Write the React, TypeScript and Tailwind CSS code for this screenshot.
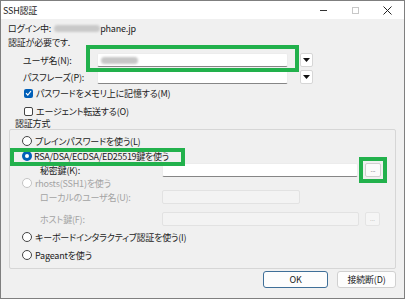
import type { ReactNode } from 'react';

const font = "font-['Meiryo_UI','Noto_Sans_CJK_JP',sans-serif] [font-feature-settings:'palt']";

function Radio({ checked = false, disabled = false }: { checked?: boolean; disabled?: boolean }) {
  if (checked) {
    return (
      <span className="w-[10px] h-[10px] rounded-full bg-[#005fb8] flex items-center justify-center shrink-0">
        <span className="w-[4px] h-[4px] rounded-full bg-white" />
      </span>
    );
  }
  return (
    <span
      className={
        'w-[10px] h-[10px] rounded-full border bg-white shrink-0 ' +
        (disabled ? 'border-[#c4c4c4]' : 'border-[#444]')
      }
    />
  );
}

function Check({ checked = false }: { checked?: boolean }) {
  if (checked) {
    return (
      <span className="w-[9px] h-[9px] rounded-[2px] bg-[#005fb8] flex items-center justify-center shrink-0">
        <svg width="7" height="6" viewBox="0 0 7 6">
          <path d="M1 3.2 L2.8 5 L6 1" fill="none" stroke="white" strokeWidth="1.2" />
        </svg>
      </span>
    );
  }
  return <span className="w-[9px] h-[9px] rounded-[2px] border border-[#444] bg-white shrink-0" />;
}

function Input({ w, children }: { w: string; children?: ReactNode }) {
  return (
    <div className={`${w} h-[14px] bg-white border border-[#ececec] border-b-[#868686] rounded-[2px] flex items-center`}>
      {children}
    </div>
  );
}

function Dropdown() {
  return (
    <div className="w-[13px] h-[14px] bg-white border border-[#d6d6d6] rounded-[2px] flex items-center justify-center">
      <svg width="7" height="4" viewBox="0 0 7 4">
        <path d="M0 0 H7 L3.5 4 Z" fill="#111" />
      </svg>
    </div>
  );
}

function Dots({ disabled = false, w = 'w-[16px]' }: { disabled?: boolean; w?: string }) {
  return (
    <div
      className={
        `${w} h-[14px] rounded-[2px] border flex items-end justify-center pb-[3px] text-[6px] leading-none tracking-normal ` +
        (disabled ? 'bg-[#f5f5f5] border-[#e4e4e4] text-[#b0b0b0]' : 'bg-[#fbfbfb] border-[#d0d0d0] text-[#555]')
      }
    >
      ...
    </div>
  );
}

export default function App() {
  return (
    <div className={`relative w-[405px] h-[299px] border border-[#7f7f7f] bg-[#f0f0f0] flex flex-col text-[9px] leading-none tracking-[-0.2px] text-[#1b1b1b] ${font}`}>
      {/* title bar */}
      <div className="h-[18px] bg-white flex items-center shrink-0">
        <span className="pl-[2px]">SSH認証</span>
        <div className="ml-auto flex h-full">
          <div className="w-[32px] flex items-center justify-center">
            <span className="w-[7px] h-[1px] bg-[#333]" />
          </div>
          <div className="w-[32px] flex items-center justify-center">
            <span className="w-[7px] h-[7px] border border-[#c8c8c8]" />
          </div>
          <div className="w-[33px] flex items-center justify-center">
            <svg width="9" height="9" viewBox="0 0 9 9">
              <path d="M0.5 0.5 L8.5 8.5 M8.5 0.5 L0.5 8.5" stroke="#222" strokeWidth="1" />
            </svg>
          </div>
        </div>
      </div>

      <div className="flex-1 flex flex-col px-[7px]">
        <div className="mt-[2px] h-[14px] flex items-center">
          <span>ログイン中:</span>
          <span className="ml-[3px] w-[46px] h-[7px] rounded-full bg-[#c9c9c9] blur-[1px]" />
          <span>phane.jp</span>
        </div>
        <div className="h-[14px] flex items-center">認証が必要です.</div>

        <div className="mt-[3px] h-[16px] flex items-center pl-[15px]">
          <span className="w-[74px]">ユーザ名(N):</span>
          <Input w="w-[191px]">
            <span className="ml-[3px] w-[37px] h-[7px] rounded-full bg-[#c6c6c6] blur-[1px]" />
          </Input>
          <div className="ml-[12px]">
            <Dropdown />
          </div>
        </div>
        <div className="mt-[1px] h-[16px] flex items-center pl-[15px]">
          <span className="w-[74px]">パスフレーズ(P):</span>
          <Input w="w-[191px]" />
          <div className="ml-[12px]">
            <Dropdown />
          </div>
        </div>

        <div className="mt-[1px] h-[14px] flex items-center pl-[16px] gap-[3px]">
          <Check checked />
          <span>パスワードをメモリ上に記憶する(M)</span>
        </div>
        <div className="mt-[4px] h-[14px] flex items-center pl-[16px] gap-[3px]">
          <Check />
          <span>エージェント転送する(O)</span>
        </div>

        <div className="h-[11px] flex items-center pl-[7px]">認証方式</div>

        <div className="ml-[1px] w-[387px] h-[140px] border border-[#d6d6d6] rounded-[2px] flex flex-col">
          <div className="mt-[4px] h-[14px] flex items-center pl-[12px] gap-[3px]">
            <Radio />
            <span>プレインパスワードを使う(L)</span>
          </div>
          <div className="mt-[1px] h-[14px] flex items-center pl-[12px] gap-[2px]">
            <Radio checked />
            <span className="tracking-[-0.3px]">RSA/DSA/ECDSA/ED25519鍵を使う</span>
          </div>
          <div className="h-[14px] flex items-center pl-[30px]">
            <span className="w-[122px]">秘密鍵(K):</span>
            <Input w="w-[196px]" />
            <div className="ml-[7px]">
              <Dots />
            </div>
          </div>
          <div className="h-[12px] flex items-center pl-[12px] gap-[3px] text-[#a3a3a3]">
            <Radio disabled />
            <span>rhosts(SSH1)を使う</span>
          </div>
          <div className="mt-[1px] h-[14px] flex items-center pl-[30px] text-[#a3a3a3]">
            <span className="w-[122px]">ローカルのユーザ名(U):</span>
            <div className="w-[138px] h-[14px] bg-[#f3f3f3] border border-[#e2e2e2] rounded-[2px]" />
          </div>
          <div className="mt-[8px] h-[14px] flex items-center pl-[30px] text-[#a3a3a3]">
            <span className="w-[122px]">ホスト鍵(F):</span>
            <div className="w-[197px] h-[14px] bg-[#f3f3f3] border border-[#e2e2e2] rounded-[2px]" />
            <div className="ml-[6px]">
              <Dots disabled w="w-[15px]" />
            </div>
          </div>
          <div className="mt-[4px] h-[14px] flex items-center pl-[12px] gap-[3px]">
            <Radio />
            <span>キーボードインタラクティブ認証を使う(I)</span>
          </div>
          <div className="mt-[4px] h-[14px] flex items-center pl-[12px] gap-[3px]">
            <Radio />
            <span>Pageantを使う</span>
          </div>
        </div>

        <div className="mt-[2px] flex justify-end gap-[9px] mr-[1px]">
          <div className="w-[65px] h-[17px] rounded-[3px] border border-[#3f6f98] bg-[#fdfdfd] flex items-center justify-center">
            OK
          </div>
          <div className="w-[59px] h-[17px] rounded-[3px] border border-[#d0d0d0] bg-[#fdfdfd] flex items-center justify-center">
            接続断(D)
          </div>
        </div>
      </div>

      {/* annotation highlights */}
      <div className="absolute left-[85px] top-[44px] w-[213px] h-[27px] border-[4px] border-[#22b14c]" />
      <div className="absolute left-[9px] top-[147px] w-[175px] h-[18px] border-[4px] border-[#22b14c]" />
      <div className="absolute left-[358px] top-[156px] w-[28px] h-[26px] border-[4px] border-[#22b14c]" />
    </div>
  );
}
